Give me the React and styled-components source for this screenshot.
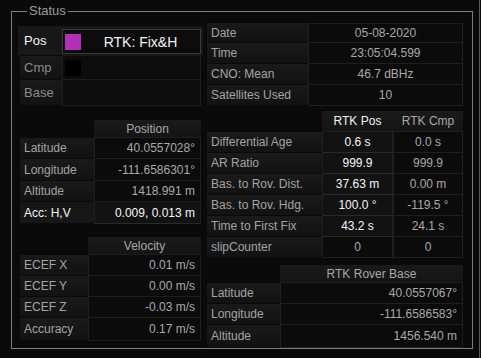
import React from 'react';
import styled, { createGlobalStyle } from 'styled-components';

const GlobalStyle = createGlobalStyle`
  html, body {
    margin: 0;
    padding: 0;
    background: #0a0a0a;
  }
  body {
    font-family: "Liberation Sans", Arial, sans-serif;
    font-size: 12px;
    color: #ababab;
  }
`;

const Screen = styled.div`
  width: 481px;
  height: 358px;
  display: flex;
  background: #0a0a0a;
  overflow: hidden;
`;

const Group = styled.fieldset`
  margin: 4px 0 0 11px;
  width: 462px;
  height: 345px;
  box-sizing: border-box;
  border: 1px solid #7c7c7c;
  padding: 3px 8px 0 8px;
  min-width: 0;
`;

const Legend = styled.legend`
  margin-left: 7px;
  padding: 0 2px;
  font-size: 13px;
  line-height: 14px;
  color: #9a9a9a;
`;

const Splitter = styled.div`
  width: 1px;
  height: 100%;
  margin-left: 6px;
  background: #5a5a5a;
`;

const Columns = styled.div`
  display: grid;
  grid-template-columns: 181px 256px;
  column-gap: 6px;
  align-items: start;
`;

const Column = styled.div`
  display: flex;
  flex-direction: column;
  padding-top: ${({ $top }) => $top || 0}px;
`;

/* fix type box */
const FixBox = styled.div`
  display: flex;
  flex-direction: column;
`;

const FixRow = styled.div`
  display: flex;
  height: ${({ $h }) => $h}px;
  margin: ${({ $selected }) => ($selected ? '0 -2px' : '0')};
  padding: ${({ $selected }) => ($selected ? '0 2px' : '0')};
  background: ${({ $selected }) => ($selected ? '#181818' : 'transparent')};
`;

const FixLabel = styled.div`
  width: 42px;
  display: flex;
  align-items: center;
  padding-left: 4px;
  box-sizing: border-box;
  font-size: 13px;
  color: ${({ $selected }) => ($selected ? '#f4f4f4' : '#8c8c8c')};
  background: ${({ $selected }) => ($selected ? 'transparent' : 'linear-gradient(#1a1a1a, #121212)')};
  border-bottom: 1px solid #0a0a0a;
`;

const FixValue = styled.div`
  flex: 1;
  display: flex;
  align-items: center;
  padding-left: 2px;
  box-sizing: border-box;
  background: #0c0c0c;
  border: 1px solid ${({ $selected }) => ($selected ? '#3a3a3a' : '#1e1e1e')};
  border-top-width: ${({ $selected }) => ($selected ? 1 : 0)}px;
  margin: ${({ $selected }) => ($selected ? '3px 0 2px' : '0')};
`;

const Swatch = styled.span`
  width: 16px;
  height: 16px;
  flex: none;
  background: ${({ $color }) => $color};
`;

const FixText = styled.span`
  flex: 1;
  text-align: center;
  font-size: 14px;
  color: #f2f2f2;
`;

/* data tables */
const Table = styled.div`
  display: grid;
  grid-template-columns: ${({ $cols }) => $cols};
  grid-template-rows: ${({ $rows }) => $rows};
  margin-top: ${({ $gap }) => $gap || 0}px;
`;

const Blank = styled.div``;

const Head = styled.div`
  display: flex;
  align-items: center;
  justify-content: center;
  background: linear-gradient(#1a1a1a, #141414);
  color: ${({ $hi }) => ($hi ? '#f4f4f4' : '#a8a8a8')};
  font-size: 12px;
  border-bottom: 1px solid #1e1e1e;
`;

const Label = styled.div`
  display: flex;
  align-items: center;
  padding-left: 4px;
  white-space: nowrap;
  box-sizing: border-box;
  background: ${({ $hi }) => ($hi ? '#171717' : 'linear-gradient(#1a1a1a, #121212)')};
  color: ${({ $hi }) => ($hi ? '#f6f6f6' : '#a4a4a4')};
  border-bottom: 1px solid #0a0a0a;
`;

const Value = styled.div`
  display: flex;
  align-items: center;
  justify-content: ${({ $align }) => ($align === 'right' ? 'flex-end' : 'center')};
  padding-right: ${({ $align }) => ($align === 'right' ? 5 : 0)}px;
  white-space: nowrap;
  box-sizing: border-box;
  background: ${({ $hi }) => ($hi ? '#121212' : '#0b0b0b')};
  color: ${({ $hi }) => ($hi ? '#f6f6f6' : '#a9a9a9')};
  border-left: 1px solid #1f1f1f;
  border-right: 1px solid #1f1f1f;
  border-bottom: 1px solid ${({ $hi }) => ($hi ? '#2a2a2a' : '#1f1f1f')};
  border-top: ${({ $top }) => ($top ? '1px solid #1f1f1f' : 'none')};
`;

const info = [
  ['Date', '05-08-2020'],
  ['Time', '23:05:04.599'],
  ['CNO: Mean', '46.7 dBHz'],
  ['Satellites Used', '10'],
];

const position = [
  ['Latitude', '40.0557028°'],
  ['Longitude', '-111.6586301°'],
  ['Altitude', '1418.991 m'],
];

const rtk = [
  ['Differential Age', '0.6 s', '0.0 s', true],
  ['AR Ratio', '999.9', '999.9', true],
  ['Bas. to Rov. Dist.', '37.63 m', '0.00 m', true],
  ['Bas. to Rov. Hdg.', '100.0 °', '-119.5 °', true],
  ['Time to First Fix', '43.2 s', '24.1 s', true],
  ['slipCounter', '0', '0', false],
];

const velocity = [
  ['ECEF X', '0.01 m/s'],
  ['ECEF Y', '0.00 m/s'],
  ['ECEF Z', '-0.03 m/s'],
  ['Accuracy', '0.17 m/s'],
];

const rover = [
  ['Latitude', '40.0557067°'],
  ['Longitude', '-111.6586583°'],
  ['Altitude', '1456.540 m'],
];

const App = () => (
  <>
    <GlobalStyle />
    <Screen>
      <Group>
        <Legend>Status</Legend>
        <Columns>
          <Column $top={5}>
            <FixBox>
              <FixRow $h={30} $selected>
                <FixLabel $selected>Pos</FixLabel>
                <FixValue $selected>
                  <Swatch $color="#b22fb6" />
                  <FixText>RTK: Fix&amp;H</FixText>
                </FixValue>
              </FixRow>
              <FixRow $h={24}>
                <FixLabel>Cmp</FixLabel>
                <FixValue>
                  <Swatch $color="#000" />
                </FixValue>
              </FixRow>
              <FixRow $h={26}>
                <FixLabel>Base</FixLabel>
                <FixValue />
              </FixRow>
            </FixBox>

            <Table $cols="74px 107px" $rows="18px 21px 22px 21px 22px" $gap={14}>
              <Blank />
              <Head>Position</Head>
              {position.map(([k, v]) => (
                <React.Fragment key={k}>
                  <Label>{k}</Label>
                  <Value $align="right">{v}</Value>
                </React.Fragment>
              ))}
              <Label $hi>Acc: H,V</Label>
              <Value $align="right" $hi>0.009, 0.013 m</Value>
            </Table>

            <Table $cols="68px 113px" $rows="18px 21px 21px 21px 23px" $gap={13}>
              <Blank />
              <Head>Velocity</Head>
              {velocity.map(([k, v]) => (
                <React.Fragment key={k}>
                  <Label>{k}</Label>
                  <Value $align="right">{v}</Value>
                </React.Fragment>
              ))}
            </Table>
          </Column>

          <Column $top={2}>
            <Table $cols="101px 155px" $rows="20px 21px 21px 21px">
              {info.map(([k, v], i) => (
                <React.Fragment key={k}>
                  <Label>{k}</Label>
                  <Value $top={i === 0}>{v}</Value>
                </React.Fragment>
              ))}
            </Table>

            <Table $cols="115px 71px 70px" $rows="21px repeat(6, 21px)" $gap={5}>
              <Blank />
              <Head $hi>RTK Pos</Head>
              <Head>RTK Cmp</Head>
              {rtk.map(([k, a, b, hi]) => (
                <React.Fragment key={k}>
                  <Label>{k}</Label>
                  <Value $hi={hi}>{a}</Value>
                  <Value>{b}</Value>
                </React.Fragment>
              ))}
            </Table>

            <Table $cols="73px 183px" $rows="18px 21px 21px 23px" $gap={7}>
              <Blank />
              <Head>RTK Rover Base</Head>
              {rover.map(([k, v]) => (
                <React.Fragment key={k}>
                  <Label>{k}</Label>
                  <Value $align="right">{v}</Value>
                </React.Fragment>
              ))}
            </Table>
          </Column>
        </Columns>
      </Group>
      <Splitter />
    </Screen>
  </>
);

export default App;
